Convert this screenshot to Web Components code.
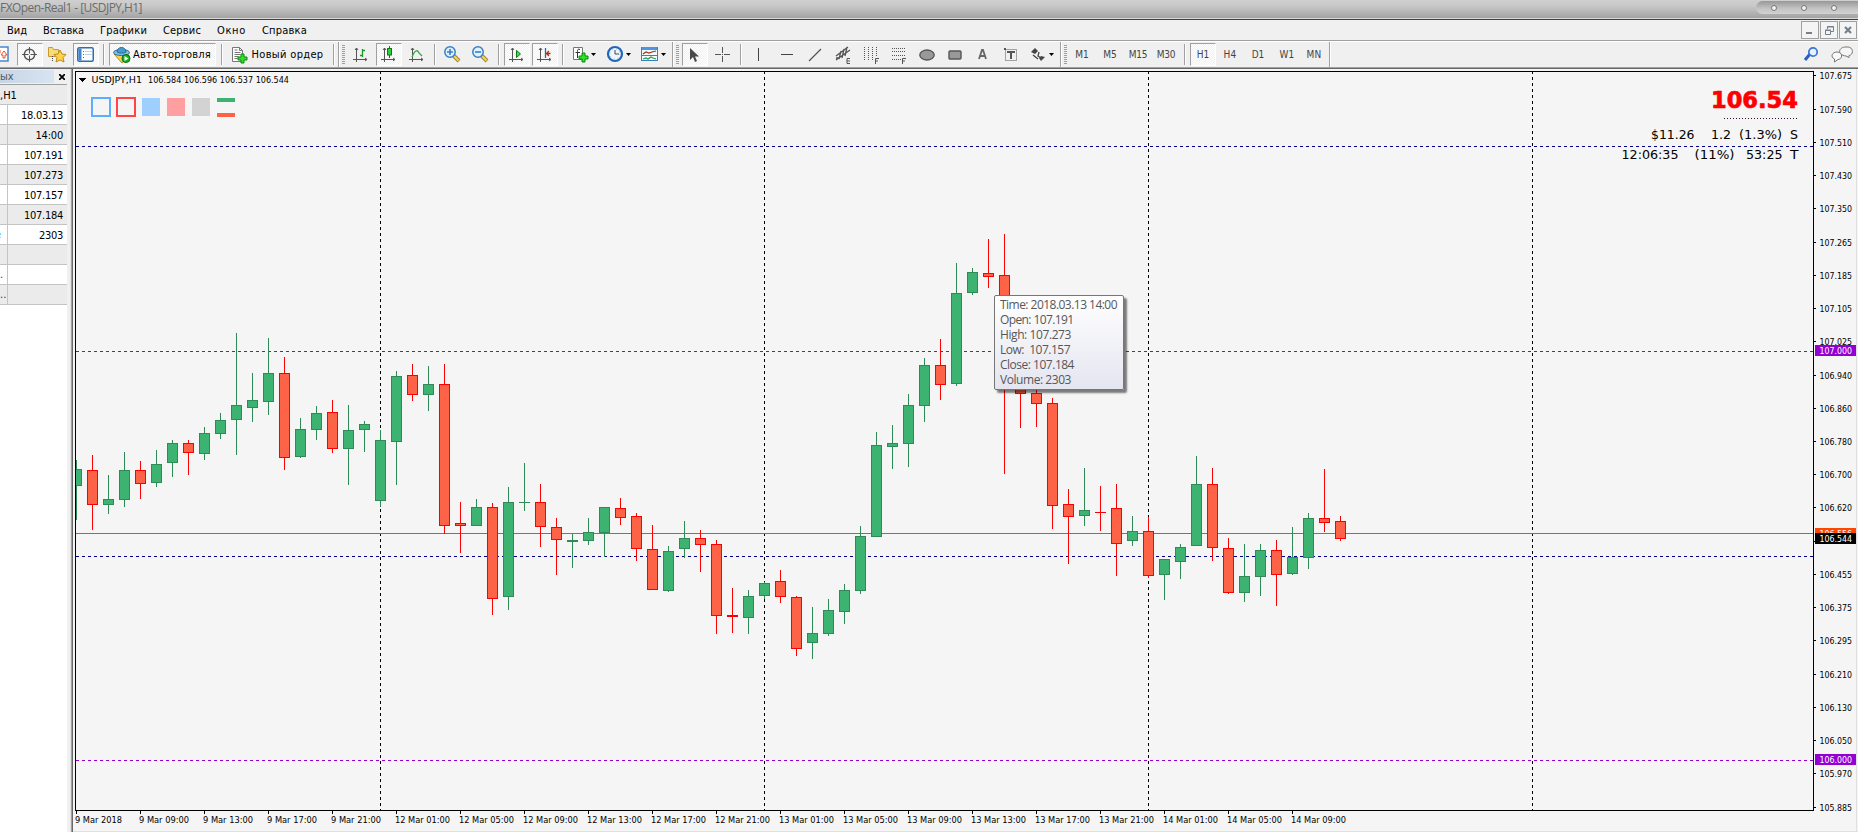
<!DOCTYPE html>
<html lang="ru">
<head>
<meta charset="utf-8">
<title>FXOpen-Real1 - [USDJPY,H1]</title>
<style>
    body {
        margin: 0;
        overflow: hidden;
        font-family: "DejaVu Sans Condensed", "DejaVu Sans", "Noto Sans", sans-serif;
        font-stretch: condensed;
        color: #000;
    }
</style>
</head>
<body>
<trade-terminal></trade-terminal>

<script>
// text spaced out to a known width
class FitText extends HTMLElement{
    constructor(){
        super();
        this.attachShadow({mode: 'open'}).innerHTML =
            '<style>:host { display: inline-block; flex: none; white-space: pre; line-height: 1.2; }</style><slot></slot>';
    }
    connectedCallback(){
        const want = parseFloat(this.getAttribute('w'));
        const n = this.textContent.length;
        const real = this.getBoundingClientRect().width;
        if (want && real && n > 1) this.style.letterSpacing = (want - real) / n + 'px';
    }
}

class TitleBar extends HTMLElement{
    constructor(){
        super();
        this.attachShadow({mode: 'open'}).innerHTML = `
            <style>
                :host {
                    display: flex;
                    justify-content: space-between;
                    box-sizing: border-box;
                    height: 20px;
                    background: linear-gradient(#cfcfcf 0, #c8c8c8 6px, #a3a3a3 18px);
                    border-bottom: 1px solid #404040;
                    box-shadow: inset 0 -1px #d8d8d8;
                    color: #6b6b6b;
                    font: 12px/16px "Open Sans", sans-serif;
                }
                fit-text { line-height: 16px; }
                .pill {
                    display: flex;
                    align-items: center;
                    gap: 24px;
                    box-sizing: border-box;
                    width: 102px;
                    height: 13px;
                    margin-top: 1px;
                    padding-left: 15px;
                    border-radius: 7px 0 0 7px;
                    background: linear-gradient(#989898, #c4c4c4 60%, #d2d2d2);
                }
                i {
                    box-sizing: border-box;
                    width: 6px;
                    height: 6px;
                    border: 1px solid #777;
                    border-radius: 50%;
                    background: #f2f2f2;
                }
            </style>
            <fit-text w="142">FXOpen-Real1 - [USDJPY,H1]</fit-text>
            <div class="pill"><i></i><i></i><i></i></div>`;
    }
}

class MenuBar extends HTMLElement{
    constructor(){
        super();
        this.attachShadow({mode: 'open'}).innerHTML = `
            <style>
                :host {
                    display: flex;
                    box-sizing: border-box;
                    height: 22px;
                    padding-left: 7px;
                    background: #f0f0f0;
                    border-bottom: 1px solid #fff;
                    box-shadow: inset 0 -1px #a0a0a0;
                    font-size: 11px;
                }
                nav { display: flex; gap: 16px; padding-top: 4px; flex: 1; }
                .win { display: flex; gap: 1px; padding: 1px 0 0; margin-right: 1px; }
                .win svg { border: 1px solid #a0a0a0; width: 16px; height: 16px; background: #f4f4f4; }
            </style>
            <nav>
                <fit-text w="20">Вид</fit-text>
                <fit-text w="41">Вставка</fit-text>
                <fit-text w="47">Графики</fit-text>
                <fit-text w="38">Сервис</fit-text>
                <fit-text w="29">Окно</fit-text>
                <fit-text w="45">Справка</fit-text>
            </nav>
            <div class="win">
                <svg><path d="M4 11h6" stroke="#74808c" stroke-width="2"/></svg>
                <svg fill="none" stroke="#74808c"><path d="M6.500 7V4.500h6v5H10M6 5h7M4.500 8.500h5v4h-5zM4 8h6"/></svg>
                <svg><path d="M5 5l6 6M11 5l-6 6" stroke="#74808c" stroke-width="2.200"/></svg>
            </div>`;
    }
}

const axes = '<path d="M3.500 2v14M0 13.500h14M2 4l1.500-2L5 4M12 12l2 1.500L12 15" fill="none" stroke="#555"/>';
const plus = '<path d="M10 7h3v3h3v3h-3v3h-3v-3H7v-3h3z" fill="#2fe02f" stroke="#0a8a0a"/>';
const lens = '<path d="M9 9l6 6" stroke="#a8862a" stroke-width="4"/><path d="M10 10l4.500 4.500" stroke="#f0d560" stroke-width="2"/><circle cx="6" cy="6" r="5.200" fill="#dff1fd" stroke="#3a7fc4" stroke-width="1.500"/>';
const icons = {
    market: '<path d="M-8 1H8v14H-8z" fill="#fff" stroke="#4a87c7" stroke-width="1.500"/><path d="M4 5l3 4H5v3H3V9H1z" fill="none" stroke="#e2562c"/><path d="M0 4v3H-2" stroke="#e2562c"/>',
    target: '<g fill="none" stroke="#555"><circle cx="7.500" cy="8.500" r="5.200" stroke-width="1.400"/><path d="M7.500 1v6.500M7.500 9.500V16M0 8.500h6.500M8.500 8.500H15"/></g>',
    star: '<path d="M-1.500 1.500h4l1 2h5v7h-10z" fill="#f7dc7d" stroke="#c79b2b"/><path d="M2.500 10v6" stroke="#444" stroke-dasharray="1 1"/><path d="M10 4l2 4 4 .5-3 3 1 4.500-4-2-4 2 1-4.500-3-3 4-.5z" fill="#ffd44a" stroke="#b98a1e"/>',
    panel: '<g transform="translate(-1 0)"><rect x=".75" y="1.750" width="15.500" height="13.500" rx="1.500" fill="#fff" stroke="#2f6fae" stroke-width="1.500"/><path d="M1.500 2.500h3v12h-3z" fill="#3f86cf"/><path d="M6 5.500h1M6 8.500h1M6 11.500h1" stroke="#d33"/><path d="M8 5.500h7M8 8.500h7" stroke="#bcd2ea"/></g>',
    auto: '<g transform="translate(-1 0)"><path d="M1 7l8 9 6-5V6z" fill="#f5d04c" stroke="#b98d1c"/><ellipse cx="8.500" cy="5.500" rx="8" ry="3" fill="#7cc3ec" stroke="#27699c"/><path d="M4 5c0-6 9-6 9 0-2 1.500-7 1.500-9 0z" fill="#4a9ad0" stroke="#27699c"/><circle cx="13" cy="11.500" r="4" fill="#16b01e" stroke="#0a7010"/><path d="M11.500 9v5l4-2.500z" fill="#fff"/></g>',
    order: '<g transform="translate(-2 0)"><path d="M1.500.500h7l3 3v11h-10z" fill="#fff" stroke="#777"/><path d="M3.500 3h3M3.500 5.500h6M3.500 7.500h6M3.500 9.500h4M3.500 11.500h3" stroke="#777"/><path d="M8.500.500v3h3" fill="none" stroke="#777"/>' + plus + '</g>',
    bars: axes + '<path d="M9.500 3v8M7 9.500h2M10 4.500h2" stroke="#1a9a2a" stroke-width="1.300" fill="none"/>',
    candles: axes + '<path d="M8.500 0v12" stroke="#0a7a14"/><rect x="6.500" y="2.500" width="4" height="6.500" fill="#2fd03b" stroke="#0a7a14"/>',
    line: axes + '<path d="M3 11c3-8 6-7 7-4l3 3" fill="none" stroke="#3aa648" stroke-width="1.300"/>',
    zoomin: lens + '<path d="M3 6h6M6 3v6" stroke="#3a7fc4" stroke-width="1.600"/>',
    zoomout: lens + '<path d="M3 6h6" stroke="#3a7fc4" stroke-width="1.600"/>',
    scroll: axes + '<path d="M7.500 4.500v7l4-3.500z" fill="#4fd35a" stroke="#0a7a14"/>',
    shift: axes + '<path d="M8.500 2v10" stroke="#1b6fa8" stroke-width="1.300"/><path d="M13.500 7.500H10M12 5l-2.500 2.500L12 10" fill="none" stroke="#b32b00" stroke-width="1.300"/>',
    indicator: '<path d="M1.500 1.500h9v12h-9z" fill="#fff" stroke="#777"/><path d="M8 3.500c-2-1-2.500 0-2.500 2V12M3.500 6.500H8" fill="none" stroke="#333"/>' + plus,
    clock: '<circle cx="8" cy="8" r="7" fill="#eef5fc" stroke="#1f66bb" stroke-width="2.200"/><path d="M8 4v4h4" fill="none" stroke="#444"/><circle cx="8" cy="8" r="5" fill="none" stroke="#9bb" stroke-dasharray="1 3"/>',
    template: '<rect x=".5" y="1.500" width="16" height="13" fill="#f3faff" stroke="#3a7fc4"/><path d="M1 2.500h15" stroke="#4a97e0" stroke-width="3"/><path d="M2 8l3-2 3 1 3-1 4-1" fill="none" stroke="#a03018" stroke-width="1.200"/><path d="M1 9.500h15" stroke="#3a7fc4"/><path d="M2 13l3-1 2 1 3-2 2 1 3 1" fill="none" stroke="#2c9a40" stroke-width="1.200"/>',
    cursor: '<path d="M3 2v12l3-3 2 5 2-1-2-4.500h4z" fill="#4a4a4a"/>',
    cross: '<path d="M7.500 1v6M7.500 10v6M0 8.500h6M9 8.500h6M7 8.500h1" stroke="#555"/>',
    vline: '<path d="M8.500 2v13" stroke="#444"/>',
    hline: '<path d="M2 8.500h12" stroke="#444"/>',
    trend: '<path d="M2 15L14 3" stroke="#555" stroke-width="1.200"/>',
    channel: '<path d="M1 10l12-9M1 14L15 4M4 13L6 5M7 12l2-9M10 10l2-9M1 12h3" stroke="#555" stroke-width="1.300"/><path d="M15 12.500h-3v5h3M12 15h3" fill="none" stroke="#555"/>',
    cycles: '<path d="M1.500 1v13M5.500 1v13M9.500 1v13M13.500 1v9" stroke="#555" stroke-dasharray="1 1"/><path d="M12.500 18v-5.500H16M12 15h3" fill="none" stroke="#555"/>',
    fibo: '<path d="M1 2.500h13M1 5.500h13M1 9.500h13M1 13.500h9" stroke="#555" stroke-dasharray="1 1"/><path d="M11.500 18v-5.500H15M11 15h3" fill="none" stroke="#555"/>',
    ellipse: '<ellipse cx="8" cy="9" rx="7.200" ry="5" fill="#999" stroke="#555" stroke-width="1.300"/>',
    rect: '<rect x="2" y="5" width="12" height="8" rx="1" fill="#999" stroke="#555" stroke-width="1.400"/>',
    letter: '<path d="M4 13L7 4h1l3 9M5 10h5" fill="none" stroke="#666" stroke-width="1.800"/>',
    label: '<path d="M2.500 3.500h11v11h-11z" fill="none" stroke="#555" stroke-dasharray="1 1"/><path d="M4 6h8M8 6v7" stroke="#555" stroke-width="2"/><path d="M1 2h2v2H1z" fill="#555"/>',
    arrows: '<path d="M1 6l4-4 3 3-3 3zM9 12l2-2 4 1-4 4z" fill="#444"/><path d="M3 9l5 4M9 6l-1 4 3 2" fill="none" stroke="#444" stroke-width="1.300"/>',
    search: '<path d="M1 14l5-6" stroke="#2a5fc0" stroke-width="3"/><circle cx="9" cy="6" r="4.200" fill="#e8f2ff" stroke="#3a74d8" stroke-width="1.700"/>',
    chat: '<path d="M15 1c8-1 8 8 3 8.500v2L15 10C6 9 7 1 15 1z" fill="#f6f6f6" stroke="#777"/><path d="M6 6c6 0 6 7 1 7.500L3.500 16v-3C-1 11 1 6 6 6z" fill="#fafafa" stroke="#777"/>'
};

class ToolButton extends HTMLElement{
    constructor(){
        super();
        this.attachShadow({mode: 'open'});
    }
    connectedCallback(){
        const icon = this.getAttribute('icon');
        const drop = this.hasAttribute('drop');
        this.shadowRoot.innerHTML = `
            <style>
                :host {
                    display: flex;
                    flex: none;
                    align-items: center;
                    justify-content: center;
                    box-sizing: border-box;
                    height: 23px;
                    gap: 3px;
                    color: #444;
                    font-size: 10px;
                    white-space: nowrap;
                }
                :host([pressed]) {
                    border: 1px solid;
                    border-color: #a0a0a0 #fff #fff #a0a0a0;
                    background: repeating-conic-gradient(#fff 0 25%, #f1f1f1 0 50%) 0 0 / 2px 2px;
                }
                :host([wide]) { color: #000; font-size: 11px; }
                svg { display: block; overflow: visible; flex: none; }
                .i { margin-bottom: 1px; }
                :host([wide]) .i { margin-bottom: -1px; }
                slot { display: block; padding-top: 1px; }
                :host([wide]) slot { padding: 0; }
                :host([icon]:not([wide])) slot { display: none; }
            </style>
            ${icon ? `<svg class="i" width="${icon == 'chat' ? 21 : icon == 'template' ? 17 : 16}" height="16">${icons[icon]}</svg>` : ''}
            <slot></slot>
            ${drop ? '<svg width="5" height="3"><path d="M0 0h5L2.500 3z" fill="#000"/></svg>' : ''}`;
        this.style.width = (this.getAttribute('w') || 26) + 'px';
        this.style.marginLeft = (this.getAttribute('gap') || 2) + 'px';
    }
}

class ToolSep extends HTMLElement{
    constructor(){
        super();
        this.attachShadow({mode: 'open'}).innerHTML = `
            <style>
                :host { display: block; flex: none; box-sizing: border-box; width: 2px; height: 21px; border-left: 1px solid #a0a0a0; border-right: 1px solid #fff; }
                :host([edge]) { height: 25px; }
                :host([grip]) {
                    width: 3px;
                    height: 19px;
                    border: 0;
                    background: repeating-linear-gradient(#a0a0a0 0 1px, #f0f0f0 1px 2px);
                }
            </style>`;
    }
    connectedCallback(){
        this.style.marginLeft = (this.getAttribute('gap') || 2) + 'px';
    }
}

class ToolBar extends HTMLElement{
    constructor(){
        super();
        this.attachShadow({mode: 'open'}).innerHTML = `
            <style>
                :host {
                    display: flex;
                    align-items: center;
                    box-sizing: border-box;
                    height: 27px;
                    padding-bottom: 1px;
                    background: #f0f0f0;
                    border-bottom: 1px solid #696969;
                    box-shadow: inset 0 -1px #a0a0a0;
                }
                .space { flex: 1; }
            </style>
            <tool-button icon="market" w="9" gap="0" style="justify-content:flex-start"></tool-button>
            <tool-button icon="target" gap="8" pressed></tool-button>
            <tool-button icon="star"></tool-button>
            <tool-button icon="panel" pressed></tool-button>
            <tool-sep gap="4"></tool-sep>
            <tool-button icon="auto" w="107" gap="4" pressed wide><fit-text w="78">Авто-торговля</fit-text></tool-button>
            <tool-sep gap="5"></tool-sep>
            <tool-button icon="order" w="104" gap="3" wide><fit-text w="72">Новый ордер</fit-text></tool-button>
            <tool-sep gap="3"></tool-sep>
            <tool-sep gap="3" edge></tool-sep>
            <tool-sep grip></tool-sep>
            <tool-button icon="bars" gap="3"></tool-button>
            <tool-button icon="candles" pressed></tool-button>
            <tool-button icon="line"></tool-button>
            <tool-sep gap="4"></tool-sep>
            <tool-button icon="zoomin" gap="3"></tool-button>
            <tool-button icon="zoomout"></tool-button>
            <tool-sep gap="5"></tool-sep>
            <tool-button icon="scroll" gap="4" pressed></tool-button>
            <tool-button icon="shift" pressed></tool-button>
            <tool-sep gap="4"></tool-sep>
            <tool-button icon="indicator" w="33" gap="3" drop></tool-button>
            <tool-button icon="clock" w="33" drop></tool-button>
            <tool-button icon="template" w="33" drop></tool-button>
            <tool-sep edge></tool-sep>
            <tool-sep grip></tool-sep>
            <tool-button icon="cursor" gap="3" pressed></tool-button>
            <tool-button icon="cross"></tool-button>
            <tool-sep gap="4"></tool-sep>
            <tool-button icon="vline" gap="3"></tool-button>
            <tool-button icon="hline" gap="3"></tool-button>
            <tool-button icon="trend"></tool-button>
            <tool-button icon="channel"></tool-button>
            <tool-button icon="cycles"></tool-button>
            <tool-button icon="fibo"></tool-button>
            <tool-button icon="ellipse"></tool-button>
            <tool-button icon="rect"></tool-button>
            <tool-button icon="letter"></tool-button>
            <tool-button icon="label"></tool-button>
            <tool-button icon="arrows" w="32" drop></tool-button>
            <tool-sep edge></tool-sep>
            <tool-sep grip></tool-sep>
            <tool-button><fit-text w="13.500">M1</fit-text></tool-button>
            <tool-button><fit-text w="13.500">M5</fit-text></tool-button>
            <tool-button><fit-text w="18.500">M15</fit-text></tool-button>
            <tool-button><fit-text w="18.500">M30</fit-text></tool-button>
            <tool-sep gap="5"></tool-sep>
            <tool-button gap="4" pressed><fit-text w="12.500">H1</fit-text></tool-button>
            <tool-button gap="1"><fit-text w="13">H4</fit-text></tool-button>
            <tool-button><fit-text w="12.500">D1</fit-text></tool-button>
            <tool-button gap="3"><fit-text w="15">W1</fit-text></tool-button>
            <tool-button gap="1"><fit-text w="15">MN</fit-text></tool-button>
            <tool-sep edge></tool-sep>
            <div class="space"></div>
            <tool-button icon="search" w="16"></tool-button>
            <tool-button icon="chat" w="21" gap="11" style="margin-right:6px"></tool-button>`;
    }
}

class DataWindow extends HTMLElement{
    constructor(){
        super();
        const rows = [['', '18.03.13'], ['', '14:00'], ['', '107.191'], ['', '107.273'], ['', '107.157'],
            ['', '107.184'], ['e', '2303'], ['', ''], ['.', ''], ['..', '']];
        const widths = {'18.03.13': 42, '14:00': 27.5, '2303': 24};
        this.attachShadow({mode: 'open'}).innerHTML = `
            <style>
                :host {
                    display: flex;
                    flex-direction: column;
                    box-sizing: border-box;
                    width: 73px;
                    background: #fff;
                    border-right: 1px solid #696969;
                    box-shadow: inset -1px 0 #a0a0a0, inset -2px 0 #e3e3e3, inset -5px 0 #f0f0f0;
                    font-size: 11px;
                }
                header { display: flex; align-items: center; height: 15px; background: #f0f0f0; margin-right: 2px; }
                header span { width: 54px; height: 13px; line-height: 14px; background: linear-gradient(90deg, #c6d5e5, #d8e4f1); color: #4d5866; font-size: 11px; }
                header svg { margin-left: 5px; }
                .row { display: flex; box-sizing: border-box; width: 67px; height: 20px; border-bottom: 1px solid #c4c4c4; line-height: 20px; }
                .name { box-sizing: border-box; width: 8px; border-right: 1px solid #c4c4c4; overflow: hidden; color: #303060; }
                .name.e { color: #4aa8f0; text-indent: -5px; }
                .value { flex: 1; text-align: right; padding-right: 4px; }
                .value fit-text { line-height: 21px; }
                .head { border-top: 1px solid #a0a0a0; height: 21px; line-height: 21px; }
            </style>
            <header><span>ых</span><svg width="6" height="6"><path d="M0 0l6 6M6 0L0 6" stroke="#000" stroke-width="1.700"/></svg></header>
            <div class="row head" style="background:#ebebeb">,H1</div>
            ${rows.map((r, i) => `<div class="row" style="background:${i % 2 ? '#ebebeb' : '#fff'}">
                <div class="name ${r[0] == 'e' ? 'e' : ''}">${r[0]}</div>
                <div class="value">${r[1] ? `<fit-text w="${widths[r[1]] || 39}">${r[1]}</fit-text>` : ''}</div></div>`).join('')}`;
    }
}

// u = bull, d = bear; wick top, body top, body bottom, wick bottom
const candles = `u460,469,486,520 d455,470,505,530 u475,499,505,514 u452,470,500,507 d461,470,484,499
u450,464,483,487 u440,443,463,477 d440,443,453,475 u427,433,454,460 u413,420,434,439
u333,405,420,455 u373,400,408,422 u338,373,402,415 d357,373,458,470 u418,429,457,458
u406,413,430,440 d400,412,449,453 u405,430,449,485 u421,424,430,452 u430,440,501,507
u371,376,442,485 d364,375,395,401 u366,384,395,411 d364,384,526,534 d502,523,526,553
u499,507,526,526 d503,507,599,615 u487,502,597,610 u463,502,503,511 d484,502,527,547
d518,527,540,575 u534,540,542,568 u518,532,541,545 u507,507,533,557 d498,508,518,525
d513,516,549,561 d525,549,590,590 u546,551,591,592 u521,538,549,558 d530,538,545,572
d540,544,616,634 d588,615,617,633 u590,596,618,634 u582,583,596,599 d570,581,597,603
d596,597,649,656 u607,633,643,659 u599,610,634,636 u584,590,612,624 u526,536,591,594
u432,445,537,537 u425,443,447,469 u394,405,444,467 u358,365,406,422 d339,365,385,400
u263,293,384,386 u268,272,293,295 d239,273,277,288 d234,275,380,474 d340,350,394,428
d388,393,404,427 d398,403,506,529 d489,504,517,564 u468,510,516,526 d486,512,513,531
d484,508,544,576 u516,531,541,546 d517,531,576,578 u559,559,575,600 u544,547,562,579
u456,484,546,546 d468,484,548,561 d538,548,593,594 u544,576,593,602 u544,550,577,596
d540,550,575,606 u527,557,574,575 u513,518,558,569 d469,518,523,532 d516,521,539,541`.split(/\s+/);

const prices = {'107.675': 75, '107.590': 109, '107.510': 142, '107.430': 175, '107.350': 208, '107.265': 242,
    '107.185': 275, '107.105': 308, '107.025': 341, '106.940': 375, '106.860': 408, '106.780': 441, '106.700': 474,
    '106.620': 507, '106.455': 574, '106.375': 607, '106.295': 640, '106.210': 674, '106.130': 707,
    '106.050': 740, '105.970': 773, '105.885': 807};
const times = ['9 Mar 2018', '9 Mar 09:00', '9 Mar 13:00', '9 Mar 17:00', '9 Mar 21:00',
    '12 Mar 01:00', '12 Mar 05:00', '12 Mar 09:00', '12 Mar 13:00', '12 Mar 17:00', '12 Mar 21:00',
    '13 Mar 01:00', '13 Mar 05:00', '13 Mar 09:00', '13 Mar 13:00', '13 Mar 17:00', '13 Mar 21:00',
    '14 Mar 01:00', '14 Mar 05:00', '14 Mar 09:00'];

class PriceChart extends HTMLElement{
    constructor(){
        super();
        this.attachShadow({mode: 'open'}).innerHTML = `
            <style>
                :host { display: block; position: relative; flex: 1; background: #f5f5f5; }
                svg { display: block; }
                text { font-size: 9.500px; white-space: pre; }
                .info { font: 13px "DejaVu Sans", sans-serif; font-stretch: normal; }
                .big { font: bold 22.500px "DejaVu Sans", sans-serif; font-stretch: normal; fill: #f00; stroke: #f00; stroke-width: .7px; }
            </style>
            <svg width="1785" height="763" viewBox="73 69 1785 763" shape-rendering="crispEdges">${this.draw()}</svg>
            <slot></slot>`;
    }
    text(x, y, w, s, extra = ''){
        return `<text x="${x}" y="${y}" textLength="${w}" lengthAdjust="spacingAndGlyphs" ${extra}>${s}</text>`;
    }
    tag(y, color, s){
        return `<rect x="1815" y="${y}" width="41" height="11" fill="${color}"/>` + this.text(1819.5, y + 9, 32.5, s, 'fill="#fff"');
    }
    draw(){
        let out = '<path d="M73 831.500h1785M1856.500 69v763" stroke="#e0e0e0"/>';
        for (const x of [380, 764, 1148, 1532])
            out += `<path d="M${x}.500 71V810" stroke="#000" stroke-dasharray="3 3"/>`;
        for (const [y, c] of [[146, '#000080'], [351, '#9400d3'], [556, '#000080'], [760, '#9400d3']])
            out += `<path d="M76 ${y}.500H1813" stroke="${c}" stroke-dasharray="3 3"/>`;
        out += '<path d="M76 533.500H1813" stroke="#ff4500"/>';
        out += '<clipPath id="plot"><rect x="76" y="72" width="1737" height="738"/></clipPath><g clip-path="url(#plot)">';
        candles.forEach((c, i) => {
            const [a, b, d, e] = c.slice(1).split(',').map(Number);
            const x = 76 + i * 16;
            const up = c[0] == 'u';
            out += `<g fill="${up ? '#2e8b57' : '#ff0000'}"><rect x="${x}" y="${a}" width="1" height="${e - a}"/>
                <rect x="${x - 5}" y="${b}" width="11" height="${d - b}"/></g>`;
            if (d - b > 2)
                out += `<rect x="${x - 4}" y="${b + 1}" width="9" height="${d - b - 2}" fill="${up ? '#3cb371' : '#ff6347'}"/>`;
        });
        out += '</g><path d="M75.500 811V71.500H1813.500V810.500H75" fill="none" stroke="#000"/>';

        for (const p in prices)
            out += `<rect x="1814" y="${prices[p]}" width="2" height="1"/>` + this.text(1819.5, prices[p] + 4, 32.5, p);
        out += '<rect x="1814" y="541" width="2" height="1"/>';
        times.forEach((t, i) => {
            const x = 76 + i * 64;
            out += `<rect x="${x}" y="811" width="1" height="3"/>` + this.text(x - 1, 823, i == 0 ? 47 : i < 5 ? 50 : 55, t);
        });
        out += this.tag(345, '#9400d3', '107.000') + this.tag(754, '#9400d3', '106.000')
            + this.tag(528, '#ff4500', '106.556') + this.tag(533, '#000', '106.544');

        out += '<path d="M79 78h7l-3.500 4z" fill="#000"/>';
        out += this.text(91.500, 83, 50.500, 'USDJPY,H1') + this.text(148, 83, 141, '106.584 106.596 106.537 106.544');
        out += `<rect x="92" y="98" width="18" height="18" fill="none" stroke="#5eaeff" stroke-width="2"/>
            <rect x="117" y="98" width="18" height="18" fill="none" stroke="#ff4545" stroke-width="2"/>
            <rect x="142" y="98" width="18" height="18" fill="#9fcfff"/>
            <rect x="167" y="98" width="18" height="18" fill="#ff9f9f"/>
            <rect x="192" y="98" width="18" height="18" fill="#d3d3d3"/>
            <rect x="217" y="98" width="18" height="4" fill="#3cb371"/>
            <rect x="217" y="113" width="18" height="4" fill="#ff6347"/>`;

        out += this.text(1711, 108, 87, '106.54', 'class="big"');
        out += '<path d="M1724 118.500h74" stroke="#301030" stroke-dasharray="1 2"/>';
        for (const [x, y, w, s] of [[1651, 139, 43.500, '$11.26'], [1711, 139, 20, '1.2'], [1739, 139, 43, '(1.3%)'], [1790, 139, 8, 'S'],
            [1621.500, 159, 57, '12:06:35'], [1694.500, 159, 40, '(11%)'], [1746, 159, 36.500, '53:25'], [1790, 159, 8.500, 'T']])
            out += this.text(x, y, w, s, 'class="info"');
        return out;
    }
}

class BarTooltip extends HTMLElement{
    constructor(){
        super();
        this.attachShadow({mode: 'open'}).innerHTML = `
            <style>
                :host {
                    display: flex;
                    flex-direction: column;
                    align-items: flex-start;
                    position: absolute;
                    left: 921px;
                    top: 226px;
                    box-sizing: border-box;
                    width: 130px;
                    height: 95px;
                    padding: 1px 0 0 5px;
                    border: 1px solid #767676;
                    border-radius: 2px;
                    background: linear-gradient(#fff, #e4e5f0);
                    box-shadow: 3px 3px 2px rgba(0, 0, 0, .5);
                    color: #575757;
                    font: 12px/15px "Open Sans", sans-serif;
                }
                fit-text { line-height: 15px; }
            </style>
            <fit-text w="117">Time: 2018.03.13 14:00</fit-text>
            <fit-text w="73.500">Open: 107.191</fit-text>
            <fit-text w="71">High: 107.273</fit-text>
            <fit-text w="70">Low:  107.157</fit-text>
            <fit-text w="74">Close: 107.184</fit-text>
            <fit-text w="71">Volume: 2303</fit-text>`;
    }
}

class TradeTerminal extends HTMLElement{
    constructor(){
        super();
        this.attachShadow({mode: 'open'}).innerHTML = `
            <style>
                :host { display: flex; flex-direction: column; width: 1858px; height: 832px; overflow: hidden; background: #f0f0f0; }
                main { display: flex; flex: 1; min-height: 0; }
            </style>
            <title-bar></title-bar>
            <menu-bar></menu-bar>
            <tool-bar></tool-bar>
            <main>
                <data-window></data-window>
                <price-chart><bar-tooltip></bar-tooltip></price-chart>
            </main>`;
    }
}

window.customElements.define('title-bar', TitleBar);
window.customElements.define('menu-bar', MenuBar);
window.customElements.define('tool-button', ToolButton);
window.customElements.define('tool-sep', ToolSep);
window.customElements.define('tool-bar', ToolBar);
window.customElements.define('data-window', DataWindow);
window.customElements.define('bar-tooltip', BarTooltip);
window.customElements.define('price-chart', PriceChart);
window.customElements.define('trade-terminal', TradeTerminal);
// last, so that every label is already laid out when it is measured
window.customElements.define('fit-text', FitText);
</script>
</body>
</html>
